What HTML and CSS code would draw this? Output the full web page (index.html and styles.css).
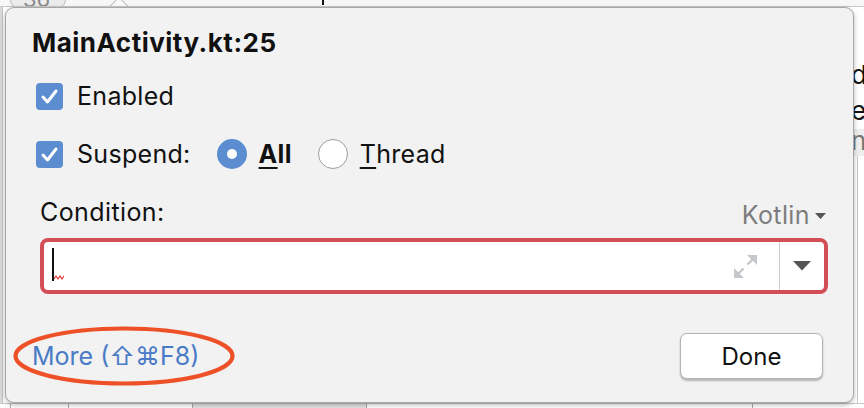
FILE: index.html
```html
<!DOCTYPE html>
<html>
<head>
<meta charset="utf-8">
<link rel="stylesheet" href="styles.css">
</head>
<body>
<div class="editor">
  <div class="tabs">
    <div class="tab">36</div>
    <div class="tab-peak"></div>
    <div class="tick"></div>
  </div>
  <div class="middle">
    <div class="gutter"></div>
    <div class="main"></div>
    <div class="side">
      <div class="side-line">d</div>
      <div class="side-line">e</div>
      <div class="side-line shaded">n</div>
      <div class="side-grid"></div>
    </div>
  </div>
  <div class="grid-row">
    <div class="cell c1"></div>
    <div class="cell c2"></div>
    <div class="cell c3"></div>
    <div class="cell c4 grey"></div>
    <div class="cell c5"></div>
    <div class="cell c6"></div>
  </div>
</div>

<div class="popup">
  <div class="title">MainActivity.kt:25</div>

  <div class="opt-row enabled-row">
    <span class="checkbox"><svg width="27" height="27" viewBox="0 0 27 27"><path d="M7 14 L11.5 19 L20 8" fill="none" stroke="#fff" stroke-width="3" stroke-linecap="round" stroke-linejoin="round"/></svg></span>
    <span class="opt-label">Enabled</span>
  </div>

  <div class="opt-row suspend-row">
    <span class="checkbox"><svg width="27" height="27" viewBox="0 0 27 27"><path d="M7 14 L11.5 19 L20 8" fill="none" stroke="#fff" stroke-width="3" stroke-linecap="round" stroke-linejoin="round"/></svg></span>
    <span class="opt-label">Suspend:</span>
    <span class="radio on"><span class="dot"></span></span>
    <span class="opt-label strong"><span class="mn">A</span>ll</span>
    <span class="radio"></span>
    <span class="opt-label"><span class="mn">T</span>hread</span>
  </div>

  <div class="cond-head">
    <span class="cond-label">Condition:</span>
    <span class="lang">Kotlin<svg class="lang-caret" width="11" height="7" viewBox="0 0 11 7"><polygon points="0,0 11,0 5.5,6" fill="#555"/></svg></span>
  </div>

  <div class="input">
    <div class="field">
      <span class="cursor"></span>
      <svg class="squiggle" width="10" height="7" viewBox="0 0 10 7"><polyline points="0,5 2,2 4,5 6,2 8,5 10,2" fill="none" stroke="#e0322f" stroke-width="1.2"/></svg>
    </div>
    <svg class="expand" width="25" height="25" viewBox="0 0 25 25">
      <polygon points="14,1 24,1 24,11" fill="#c4c8cb"/>
      <line x1="20" y1="5" x2="14.5" y2="10.5" stroke="#c4c8cb" stroke-width="2.4"/>
      <polygon points="1,14 1,24 11,24" fill="#c4c8cb"/>
      <line x1="5" y1="20" x2="10.5" y2="14.5" stroke="#c4c8cb" stroke-width="2.4"/>
    </svg>
    <div class="drop"><svg width="18" height="10" viewBox="0 0 18 10"><polygon points="0,0 18,0 9,9.5" fill="#555"/></svg></div>
  </div>

  <div class="footer">
    <span class="more">More (⇧⌘F8)</span>
    <button class="done">Done</button>
  </div>
</div>

<svg class="annot" width="232" height="68" viewBox="0 0 232 68"><ellipse cx="116" cy="34" rx="108.5" ry="27.5" fill="none" stroke="#ee5128" stroke-width="4.2"/></svg>
</body>
</html>
```
FILE: styles.css
```css
* { box-sizing: border-box; }
html, body {
  margin: 0;
  padding: 0;
  width: 864px;
  height: 408px;
  overflow: hidden;
  background: #ffffff;
  font-family: Inter, "Liberation Sans", "DejaVu Sans", sans-serif;
}

/* background editor */
.editor {
  width: 864px;
  height: 408px;
  display: flex;
  flex-direction: column;
}
.tabs {
  height: 7px;
  display: flex;
  align-items: flex-start;
  border-bottom: 1px solid #c9c9c9;
  background: #f7f7f7;
  overflow: hidden;
  position: relative;
}
.tab {
  margin-left: 10px;
  width: 56px;
  height: 14px;
  margin-top: -6px;
  border: 1px solid #bdbdbd;
  border-radius: 0 0 8px 8px;
  background: #ececec;
  color: #8a8a8a;
  font-size: 22px;
  line-height: 8px;
  padding-left: 12px;
}
.tab-peak {
  margin-left: 40px;
  width: 26px;
  height: 26px;
  margin-top: 2px;
  border-left: 1px solid #bdbdbd;
  border-top: 1px solid #bdbdbd;
  transform: rotate(45deg);
  background: #fafafa;
}
.tick {
  margin-left: 190px;
  width: 2px;
  height: 5px;
  background: #111;
}
.middle {
  flex: 1;
  display: flex;
}
.gutter {
  width: 3px;
  background: #d9d9d9;
  border-right: 1px solid #c4c4c4;
}
.main { flex: 1; }
.side {
  width: 14px;
  padding-top: 50px;
  font-size: 26px;
  color: #111;
  overflow: hidden;
  display: flex;
  flex-direction: column;
}
.side-line {
  height: 36px;
  line-height: 36px;
  padding-left: 1px;
}
.side-line.shaded {
  background: #eeeeee;
  color: #777;
  height: 27px;
  line-height: 24px;
}
.side-grid {
  margin-left: 7px;
  flex: 1;
  border-left: 1px solid #c8c8c8;
}
.grid-row {
  height: 5px;
  display: flex;
  border-top: 1px solid #c8c8c8;
}
.cell {
  border-right: 1px solid #a9a9a9;
  height: 100%;
}
.c1 { width: 11px; }
.c2 { width: 58px; }
.c3 { width: 124px; }
.c4 { width: 174px; }
.c5 { width: 386px; }
.c6 { flex: 1; border-right: none; }
.grey { background: #e3e3e3; }

/* popup */
.popup {
  position: absolute;
  left: 5px;
  top: 7px;
  width: 849px;
  height: 396px;
  background: #f2f2f2;
  border: 1px solid #a7a7a7;
  border-radius: 9px;
  box-shadow: 0 2px 5px rgba(0, 0, 0, 0.28);
  padding: 20px 25px 0 26px;
  display: flex;
  flex-direction: column;
}
.title {
  font-size: 26px;
  font-weight: 700;
  line-height: 30px;
  color: #111;
  letter-spacing: 0.5px;
}
.opt-row {
  display: flex;
  align-items: center;
  height: 28px;
  margin-left: 4px;
  font-size: 25px;
  color: #111;
}
.enabled-row { margin-top: 24px; }
.suspend-row { margin-top: 30px; }
.checkbox {
  width: 27px;
  height: 27px;
  border-radius: 4px;
  background: #5b8dd0;
  display: flex;
  margin-right: 14px;
}
.opt-label {
  line-height: 28px;
  letter-spacing: 0.3px;
}
.opt-label.strong { font-weight: 700; }
.mn {
  text-decoration: underline;
  text-underline-offset: 4px;
  text-decoration-thickness: 2px;
}
.radio {
  width: 30px;
  height: 30px;
  border-radius: 50%;
  background: #fff;
  border: 1.5px solid #9c9c9c;
  margin-left: 26px;
  margin-right: 12px;
  display: flex;
  align-items: center;
  justify-content: center;
}
.radio.on {
  background: #5b8dd0;
  border: none;
}
.dot {
  width: 10px;
  height: 10px;
  border-radius: 50%;
  background: #fff;
}
.cond-head {
  display: flex;
  justify-content: space-between;
  align-items: flex-start;
  margin-top: 32px;
  margin-left: 8px;
  margin-right: 2px;
  height: 28px;
  font-size: 25px;
  line-height: 24px;
  letter-spacing: 0.4px;
}
.cond-label { color: #111; }
.lang {
  color: #7d7d7d;
  padding-top: 3px;
  display: flex;
  align-items: center;
}
.lang-caret { margin-left: 5px; margin-top: 3px; }
.input {
  margin-top: 10px;
  margin-left: 8px;
  height: 56px;
  border: 4px solid #d34e56;
  border-radius: 8px;
  background: #fff;
  display: flex;
  align-items: stretch;
}
.field {
  flex: 1;
  position: relative;
  display: flex;
  align-items: flex-start;
  padding-left: 8px;
  padding-top: 6px;
}
.cursor {
  width: 2px;
  height: 33px;
  background: #111;
}
.squiggle {
  margin-top: 26px;
}
.expand {
  align-self: center;
  margin-right: 21px;
}
.drop {
  width: 45px;
  border-left: 1.5px solid #cdcdcd;
  display: flex;
  align-items: center;
  justify-content: center;
  padding-bottom: 1px;
}
.footer {
  margin-top: 39px;
  height: 46px;
  display: flex;
  align-items: center;
  justify-content: space-between;
  margin-right: 5px;
}
.more {
  font-size: 25px;
  color: #4a7bc6;
  line-height: 30px;
}
.done {
  width: 143px;
  height: 46px;
  background: #fff;
  border: 1px solid #b4b4b4;
  border-radius: 7px;
  box-shadow: 0 1.5px 2px rgba(0, 0, 0, 0.25);
  font-family: Inter, "Liberation Sans", sans-serif;
  font-size: 24px;
  color: #111;
  padding: 0;
}

/* annotation overlay */
.annot {
  position: absolute;
  left: 8px;
  top: 322px;
}
```
